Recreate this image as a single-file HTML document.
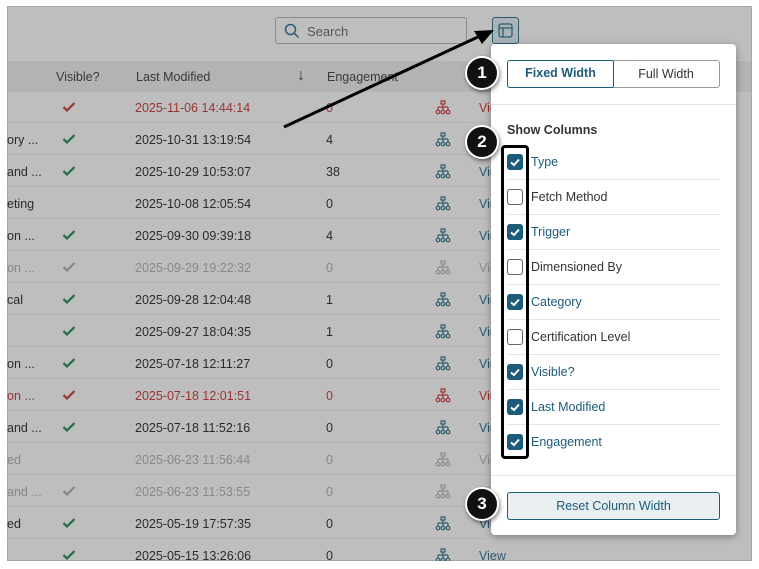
<!DOCTYPE html><html><head><style>
*{margin:0;padding:0;box-sizing:border-box}
body{width:759px;height:569px;background:#fff;position:relative;overflow:hidden;font-family:"Liberation Sans",sans-serif;font-size:12.5px;color:#2a2a2a}
.gray{position:absolute;left:7px;top:6px;width:745px;height:555px;background:#bebebe;overflow:hidden;border:1px solid #a5a5a5}
.hdr{position:absolute;left:0;top:54px;width:745px;height:31px;background:#b3b3b3;color:#3a3a3a}
.a{position:absolute;white-space:nowrap}
.row{position:absolute;left:0;width:480px;height:32px;border-bottom:1px solid #b3b3b3}
.pop{position:absolute;left:491px;top:44px;width:245px;height:491px;background:#fff;border-radius:4px;box-shadow:0 2px 8px rgba(0,0,0,.35)}
.cb{position:absolute;left:16px;width:16px;height:16px;border-radius:3px}
.on{background:#1c5c7a}
.off{border:1.5px solid #666;background:#fff}
.lbl{position:absolute;left:40px;font-size:12.5px}
.sep{position:absolute;left:16px;width:213px;height:1px;background:#e4e4e4}
.badge{position:absolute;width:34px;height:34px;border-radius:50%;background:#111;border:2px solid #fff;box-shadow:1px 2px 4px rgba(0,0,0,.5);color:#fff;font-weight:bold;font-size:17px;text-align:center;line-height:30px}
</style></head><body>
<div class="gray">
<div style="position:absolute;left:267px;top:10px;width:192px;height:27px;border:1px solid #8a8a8a;border-radius:3px"></div>
<svg class="a" style="left:276px;top:16px" width="16" height="16"><circle cx="6.5" cy="6.5" r="5" fill="none" stroke="#2d5b70" stroke-width="1.5"/><path d="M10 10l4.5 4.5" stroke="#2d5b70" stroke-width="1.5"/></svg>
<div class="a" style="left:299px;top:17px;color:#555;font-size:13px">Search</div>
<div style="position:absolute;left:484px;top:10px;width:27px;height:27px;border:1px solid #2d5b70;border-radius:3px;background:#a9b3b8"></div>
<svg class="a" style="left:490px;top:16px" width="15" height="15"><rect x="1" y="1" width="13" height="13" rx="2" fill="none" stroke="#2d5b70" stroke-width="1.3"/><path d="M1 5h13M5 5v9" stroke="#2d5b70" stroke-width="1.3"/></svg>
<div class="hdr"><div class="a" style="left:48px;top:9px">Visible?</div><div class="a" style="left:128px;top:9px">Last Modified</div><div class="a" style="left:289px;top:6px;font-size:16px">↓</div><div class="a" style="left:319px;top:9px">Engagement</div></div>
</div>
<div style="position:absolute;left:7px;top:6px;width:745px;height:555px;overflow:hidden">
<div id="rows"></div>
</div>
<script>
var d=[["","2025-11-06 14:44:14","0","r","r"],["ory ...","2025-10-31 13:19:54","4","g",""],["and ...","2025-10-29 10:53:07","38","g",""],["eting","2025-10-08 12:05:54","0","",""],["on ...","2025-09-30 09:39:18","4","g",""],["on ...","2025-09-29 19:22:32","0","d","d"],["cal","2025-09-28 12:04:48","1","g",""],["","2025-09-27 18:04:35","1","g",""],["on ...","2025-07-18 12:11:27","0","g",""],["on ...","2025-07-18 12:01:51","0","r","r"],["and ...","2025-07-18 11:52:16","0","g",""],["ed","2025-06-23 11:56:44","0","","d"],["and ...","2025-06-23 11:53:55","0","d","d"],["ed","2025-05-19 17:57:35","0","g",""],["","2025-05-15 13:26:06","0","g",""]];
var h="";d.forEach(function(r,i){var t=85+i*32;var c=r[4]=="r"?"#9b3434":r[4]=="d"?"#888":"#2a2a2a";var ic=r[4]=="r"?"#9b3434":r[4]=="d"?"#8c8c8c":"#2d5b70";var ck=r[3]=="r"?"#9b3434":r[3]=="d"?"#888":"#1e6b45";
h+='<div class="row" style="top:'+t+'px;color:'+c+'"><div class="a" style="left:0;top:10px">'+r[0]+'</div>'+(r[3]?'<svg class="a" style="left:55px;top:10px" width="14" height="12"><path d="M1.5 6l3.5 3.5L12.5 2" fill="none" stroke="'+ck+'" stroke-width="2.2"/></svg>':'')+'<div class="a" style="left:128px;top:10px">'+r[1]+'</div><div class="a" style="left:319px;top:10px">'+r[2]+'</div><svg class="a" style="left:428px;top:9px" width="16" height="15"><g fill="none" stroke="'+ic+'" stroke-width="1.2"><rect x="6" y="1" width="4" height="3"/><path d="M8 4v3M3 7h10M3 7v3M8 7v3M13 7v3"/><circle cx="3" cy="12" r="1.8"/><circle cx="8" cy="12" r="1.8"/><circle cx="13" cy="12" r="1.8"/></g></svg><div class="a" style="left:472px;top:10px;color:'+ic+'">View</div></div>';});
document.getElementById("rows").innerHTML=h;
</script>
<svg class="a" style="left:0;top:0" width="759" height="569"><path d="M284 127L480 36" stroke="#000" stroke-width="3"/><path d="M494 30L474 31L482 44Z" fill="#000"/></svg>
<div class="pop">
<div style="position:absolute;left:16px;top:16px;width:107px;height:28px;border:1.5px solid #1c5c7a;border-radius:3px 0 0 3px;color:#1c5c7a;font-weight:bold;text-align:center;line-height:25px">Fixed Width</div>
<div style="position:absolute;left:122px;top:16px;width:107px;height:28px;border:1px solid #999;border-left:none;border-radius:0 3px 3px 0;text-align:center;line-height:26px;color:#333">Full Width</div>
<div style="position:absolute;left:0;top:60px;width:245px;height:1px;background:#e4e4e4"></div>
<div class="a" style="left:16px;top:79px;font-weight:bold;color:#333">Show Columns</div>
<div id="cols"></div>
<div style="position:absolute;left:0;top:431px;width:245px;height:1px;background:#e4e4e4"></div>
<div style="position:absolute;left:16px;top:448px;width:213px;height:28px;border:1px solid #1c5c7a;border-radius:3px;background:#e9eef1;text-align:center;line-height:26px;color:#1c5c7a">Reset Column Width</div>
</div>
<script>
var c=[["Type",1],["Fetch Method",0],["Trigger",1],["Dimensioned By",0],["Category",1],["Certification Level",0],["Visible?",1],["Last Modified",1],["Engagement",1]];var h="";
c.forEach(function(x,i){var t=109+i*35;h+='<div class="cb '+(x[1]?'on':'off')+'" style="top:'+(t+1)+'px">'+(x[1]?'<svg width="16" height="16"><path d="M4 8.5l3 2.5 5-5.5" fill="none" stroke="#fff" stroke-width="2"/></svg>':'')+'</div><div class="lbl" style="top:'+(t+2)+'px;color:'+(x[1]?'#1c5c7a':'#333')+'">'+x[0]+'</div>';if(i<8)h+='<div class="sep" style="top:'+(t+26)+'px"></div>';});
document.getElementById("cols").innerHTML=h;
</script>
<div style="position:absolute;left:501px;top:145px;width:28px;height:314px;border:3px solid #000;border-radius:4px"></div>
<div class="badge" style="left:465px;top:56px">1</div>
<div class="badge" style="left:465px;top:125px">2</div>
<div class="badge" style="left:465px;top:487px">3</div>
</body></html>
